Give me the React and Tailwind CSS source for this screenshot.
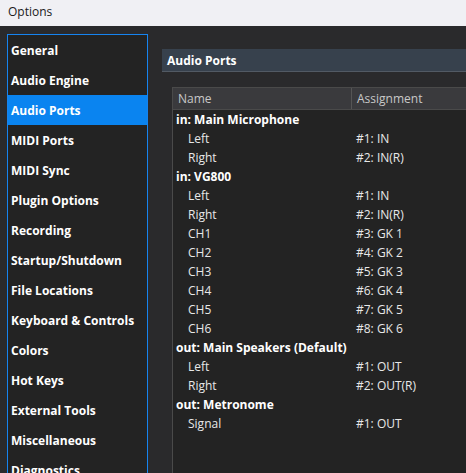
const navItems = [
  "General",
  "Audio Engine",
  "Audio Ports",
  "MIDI Ports",
  "MIDI Sync",
  "Plugin Options",
  "Recording",
  "Startup/Shutdown",
  "File Locations",
  "Keyboard & Controls",
  "Colors",
  "Hot Keys",
  "External Tools",
  "Miscellaneous",
  "Diagnostics",
];

const ports = [
  { group: "in: Main Microphone" },
  { name: "Left", assign: "#1: IN" },
  { name: "Right", assign: "#2: IN(R)" },
  { group: "in: VG800" },
  { name: "Left", assign: "#1: IN" },
  { name: "Right", assign: "#2: IN(R)" },
  { name: "CH1", assign: "#3: GK 1" },
  { name: "CH2", assign: "#4: GK 2" },
  { name: "CH3", assign: "#5: GK 3" },
  { name: "CH4", assign: "#6: GK 4" },
  { name: "CH5", assign: "#7: GK 5" },
  { name: "CH6", assign: "#8: GK 6" },
  { group: "out: Main Speakers (Default)" },
  { name: "Left", assign: "#1: OUT" },
  { name: "Right", assign: "#2: OUT(R)" },
  { group: "out: Metronome" },
  { name: "Signal", assign: "#1: OUT" },
];

const App = () => {
  return (
    <div className="w-[466px] h-[473px] overflow-hidden flex flex-col bg-[#2a2a2c] font-['Open_Sans',sans-serif]">
      <div className="h-[26px] shrink-0 bg-[#f0f0f4] flex items-center pl-2 pb-[2px] text-[12px] text-[#1a1a1a]">
        Options
      </div>

      <div className="flex flex-1 min-h-0 pt-2 pl-[7px]">
        <div className="w-[141px] shrink-0 border border-b-0 border-[#1684f0] bg-[#232323] flex flex-col">
          {navItems.map((item) => (
            <div
              key={item}
              className={`h-[30px] shrink-0 flex items-center pl-[3px] pt-[2px] text-[12px] font-bold text-white ${
                item === "Audio Ports" ? "bg-[#0a84f0]" : ""
              }`}
            >
              {item}
            </div>
          ))}
        </div>

        <div className="flex-1 min-w-0 pl-[14px] pt-[15px] flex flex-col">
          <div className="h-[23px] shrink-0 bg-[#37414d] border-b border-[#525a64] flex items-center pl-[5px] pt-[2px] text-[12px] font-bold text-white">
            Audio Ports
          </div>

          <div className="flex-1 ml-[10px] mt-[15px] border-l border-t border-[#4a4a4a] bg-[#232323] flex flex-col">
            <div className="h-[22px] shrink-0 flex bg-[#3a3a3d] border-b border-[#4a4a4a] text-[12px] text-[#c8c8c8]">
              <div className="w-[179px] shrink-0 border-r border-[#555] flex items-center pl-[5px]">Name</div>
              <div className="flex-1 flex items-center pl-[5px] whitespace-nowrap">Assignment</div>
            </div>
            {ports.map((p, i) =>
              p.group ? (
                <div key={i} className="h-[19px] shrink-0 flex items-center pl-[3px] text-[12px] font-bold text-white whitespace-nowrap">
                  {p.group}
                </div>
              ) : (
                <div key={i} className="h-[19px] shrink-0 flex items-center text-[12px] text-[#e8e8e8] whitespace-nowrap">
                  <div className="w-[180px] shrink-0 pl-[15px]">{p.name}</div>
                  <div className="pl-[3px]">{p.assign}</div>
                </div>
              )
            )}
          </div>
        </div>
      </div>
    </div>
  );
};

export default App;
